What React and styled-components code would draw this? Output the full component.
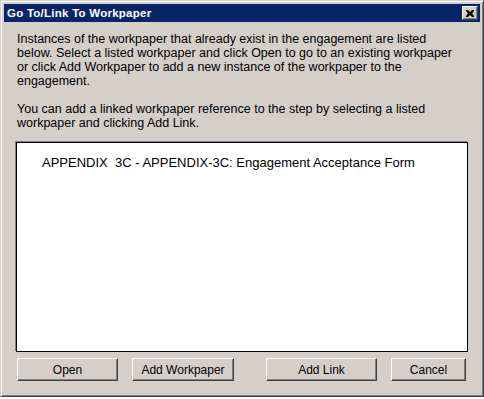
import React from "react";
import styled, { createGlobalStyle } from "styled-components";

const Global = createGlobalStyle`
  html, body { margin: 0; padding: 0; background: #fff; }
  body { font-family: "Liberation Sans", Arial, sans-serif; }
`;

// classic 3D window frame
const Window = styled.div`
  box-sizing: border-box;
  width: 484px;
  height: 397px;
  background: #d4d0c8;
  border: 1px solid;
  border-color: #d4d0c8 #404040 #404040 #d4d0c8;
  box-shadow: inset 1px 1px 0 #fff, inset -1px -1px 0 #808080;
  padding: 3px;
  display: flex;
  flex-direction: column;
`;

const TitleBar = styled.div`
  height: 18px;
  background: #0a246a;
  display: flex;
  align-items: center;
  justify-content: space-between;
  padding: 0 2px 0 3px;
`;

const Title = styled.span`
  color: #fff;
  font-weight: bold;
  font-size: 11.5px;
  letter-spacing: 0.25px;
`;

const CloseButton = styled.div`
  box-sizing: border-box;
  width: 16px;
  height: 14px;
  background: #d4d0c8;
  border: 1px solid;
  border-color: #fff #404040 #404040 #fff;
  box-shadow: inset -1px -1px 0 #808080;
  display: flex;
  align-items: center;
  justify-content: center;
`;

const Content = styled.div`
  flex: 1;
  display: flex;
  flex-direction: column;
  padding: 10px 12px 10px 12px;
`;

const Paragraph = styled.p`
  margin: 0 0 ${(p) => p.gap || 0}px 1px;
  font-size: 12.5px;
  line-height: 14px;
  color: #000;
  white-space: nowrap;
`;

const ListBox = styled.div`
  margin-top: 12px;
  height: 210px;
  box-sizing: border-box;
  background: #fff;
  border: 1px solid #000;
  box-shadow: -1px -1px 0 #808080;
  padding: 13px 0 0 25px;
`;

const ListItem = styled.div`
  font-size: 13px;
  line-height: 14px;
  color: #000;
  white-space: pre;
`;

const ButtonRow = styled.div`
  display: flex;
  margin-top: 6px;
  padding-left: 1px;
`;

const Button = styled.div`
  box-sizing: border-box;
  width: ${(p) => p.w}px;
  height: 23px;
  margin-left: ${(p) => p.gap || 0}px;
  background: #d4d0c8;
  border: 1px solid;
  border-color: #fff #404040 #404040 #fff;
  box-shadow: inset -1px -1px 0 #808080;
  display: flex;
  align-items: center;
  justify-content: center;
  font-size: 12px;
  color: #000;
`;

export default function App() {
  return (
    <>
      <Global />
      <Window>
        <TitleBar>
          <Title>Go To/Link To Workpaper</Title>
          <CloseButton>
            <svg width="8" height="7" viewBox="0 0 8 7">
              <path d="M0 0h2l2 2 2-2h2v1L6 3.5 8 6v1H6L4 5 2 7H0V6l2-2.5L0 1z" fill="#000" />
            </svg>
          </CloseButton>
        </TitleBar>
        <Content>
          <Paragraph gap={14}>
            Instances of the workpaper that already exist in the engagement are listed
            <br />
            below. Select a listed workpaper and click Open to go to an existing workpaper
            <br />
            or click Add Workpaper to add a new instance of the workpaper to the
            <br />
            engagement.
          </Paragraph>
          <Paragraph>
            You can add a linked workpaper reference to the step by selecting a listed
            <br />
            workpaper and clicking Add Link.
          </Paragraph>
          <ListBox>
            <ListItem>APPENDIX  3C - APPENDIX-3C: Engagement Acceptance Form</ListItem>
          </ListBox>
          <ButtonRow>
            <Button w={101}>Open</Button>
            <Button w={102} gap={14}>Add Workpaper</Button>
            <Button w={111} gap={32}>Add Link</Button>
            <Button w={75} gap={14}>Cancel</Button>
          </ButtonRow>
        </Content>
      </Window>
    </>
  );
}
